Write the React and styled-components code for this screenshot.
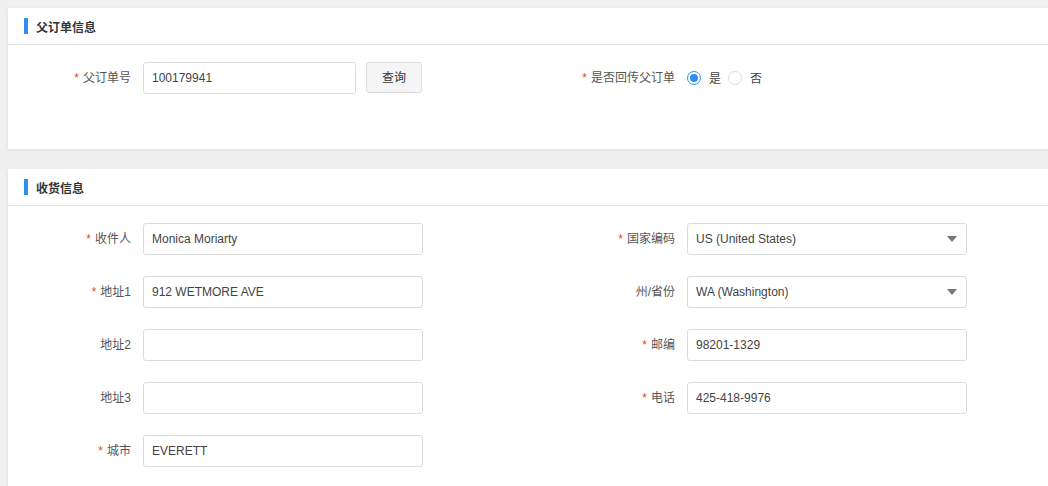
import React from "react";
import styled, { createGlobalStyle } from "styled-components";

const Global = createGlobalStyle`
  html, body { margin: 0; padding: 0; overflow: hidden; }
  body {
    background: #f0f0f0;
    font-family: "Liberation Sans", "Noto Sans CJK SC", Arial, sans-serif;
    font-size: 12px;
    color: #333;
  }
`;

const Page = styled.div`
  padding: 8px 0 0 8px;
  display: flex;
  flex-direction: column;
  gap: 20px;
`;

const Card = styled.section`
  width: 1200px;
  min-height: ${(p) => p.$minH || 0}px;
  background: #fff;
  box-shadow: 0 1px 4px rgba(0, 0, 0, 0.08);
`;

const CardHeader = styled.div`
  height: 37px;
  box-sizing: border-box;
  border-bottom: 1px solid #e2e2e2;
  display: flex;
  align-items: center;
  padding-left: 16px;
  gap: 8px;
`;

const Bar = styled.span`
  width: 4px;
  height: 16px;
  background: #2f8ff0;
`;

const Title = styled.h3`
  margin: 0;
  font-size: 12px;
  font-weight: bold;
  color: #333;
`;

const Body = styled.div`
  padding: ${(p) => p.$pad || "17px 0 0 0"};
  display: grid;
  grid-template-columns: 544px 544px;
  row-gap: 21px;
  align-items: center;
`;

const Field = styled.div`
  display: flex;
  align-items: center;
  height: 32px;
`;

const Label = styled.label`
  width: 135px;
  box-sizing: border-box;
  padding-right: 12px;
  padding-bottom: 3px;
  text-align: right;
  color: #555;
  font-size: 12px;
  white-space: nowrap;
`;

const Star = styled.span`
  color: #e5452b;
  margin-right: 4px;
  font-family: "Liberation Sans", sans-serif;
`;

const Input = styled.input`
  box-sizing: border-box;
  width: ${(p) => p.$w || 280}px;
  height: 32px;
  border: 1px solid #dcdcdc;
  border-radius: 3px;
  padding: 0 8px;
  font-family: "Liberation Sans", "Noto Sans CJK SC", Arial, sans-serif;
  font-size: 12px;
  color: #444;
  outline: none;
  background: #fff;
`;

const SelectBox = styled.div`
  box-sizing: border-box;
  width: 280px;
  height: 32px;
  border: 1px solid #dcdcdc;
  border-radius: 3px;
  padding: 0 9px 0 8px;
  display: flex;
  align-items: center;
  justify-content: space-between;
  color: #444;
`;

const Caret = styled.span`
  width: 0;
  height: 0;
  border-left: 5px solid transparent;
  border-right: 5px solid transparent;
  border-top: 6px solid #777;
`;

const Button = styled.button`
  margin-left: 10px;
  width: 56px;
  height: 31px;
  margin-top: -1px;
  background: #f5f5f5;
  border: 1px solid #dcdcdc;
  border-radius: 3px;
  font-family: "Noto Sans CJK SC", sans-serif;
  font-size: 12px;
  color: #333;
  padding: 0 0 2px;
`;

const RadioGroup = styled.div`
  display: flex;
  align-items: center;
`;

const RadioItem = styled.span`
  display: flex;
  align-items: center;
  gap: 8px;
  margin-right: 7px;
  color: #444;
  & > em {
    font-style: normal;
    padding-bottom: 2px;
  }
`;

const Circle = styled.span`
  box-sizing: border-box;
  width: 14px;
  height: 14px;
  border-radius: 50%;
  border: 1px solid ${(p) => (p.$on ? "#2f8ff0" : "#dcdcdc")};
  display: flex;
  align-items: center;
  justify-content: center;
  &::after {
    content: "";
    width: 8px;
    height: 8px;
    border-radius: 50%;
    background: ${(p) => (p.$on ? "#2f8ff0" : "transparent")};
  }
`;

function FormField({ label, required, children }) {
  return (
    <Field>
      <Label>
        {required && <Star>*</Star>}
        {label}
      </Label>
      {children}
    </Field>
  );
}

export default function App() {
  return (
    <>
      <Global />
      <Page>
        <Card $minH={141}>
          <CardHeader>
            <Bar />
            <Title>父订单信息</Title>
          </CardHeader>
          <Body>
            <FormField label="父订单号" required>
              <Input $w={213} defaultValue="100179941" />
              <Button>查询</Button>
            </FormField>
            <FormField label="是否回传父订单" required>
              <RadioGroup>
                <RadioItem>
                  <Circle $on />
                  <em>是</em>
                </RadioItem>
                <RadioItem>
                  <Circle />
                  <em>否</em>
                </RadioItem>
              </RadioGroup>
            </FormField>
          </Body>
        </Card>
        <Card>
          <CardHeader>
            <Bar />
            <Title>收货信息</Title>
          </CardHeader>
          <Body $pad="17px 0 30px 0">
            <FormField label="收件人" required>
              <Input defaultValue="Monica Moriarty" />
            </FormField>
            <FormField label="国家编码" required>
              <SelectBox>
                US (United States)
                <Caret />
              </SelectBox>
            </FormField>
            <FormField label="地址1" required>
              <Input defaultValue="912 WETMORE AVE" />
            </FormField>
            <FormField label="州/省份">
              <SelectBox>
                WA (Washington)
                <Caret />
              </SelectBox>
            </FormField>
            <FormField label="地址2">
              <Input defaultValue="" />
            </FormField>
            <FormField label="邮编" required>
              <Input defaultValue="98201-1329" />
            </FormField>
            <FormField label="地址3">
              <Input defaultValue="" />
            </FormField>
            <FormField label="电话" required>
              <Input defaultValue="425-418-9976" />
            </FormField>
            <FormField label="城市" required>
              <Input defaultValue="EVERETT" />
            </FormField>
          </Body>
        </Card>
      </Page>
    </>
  );
}
